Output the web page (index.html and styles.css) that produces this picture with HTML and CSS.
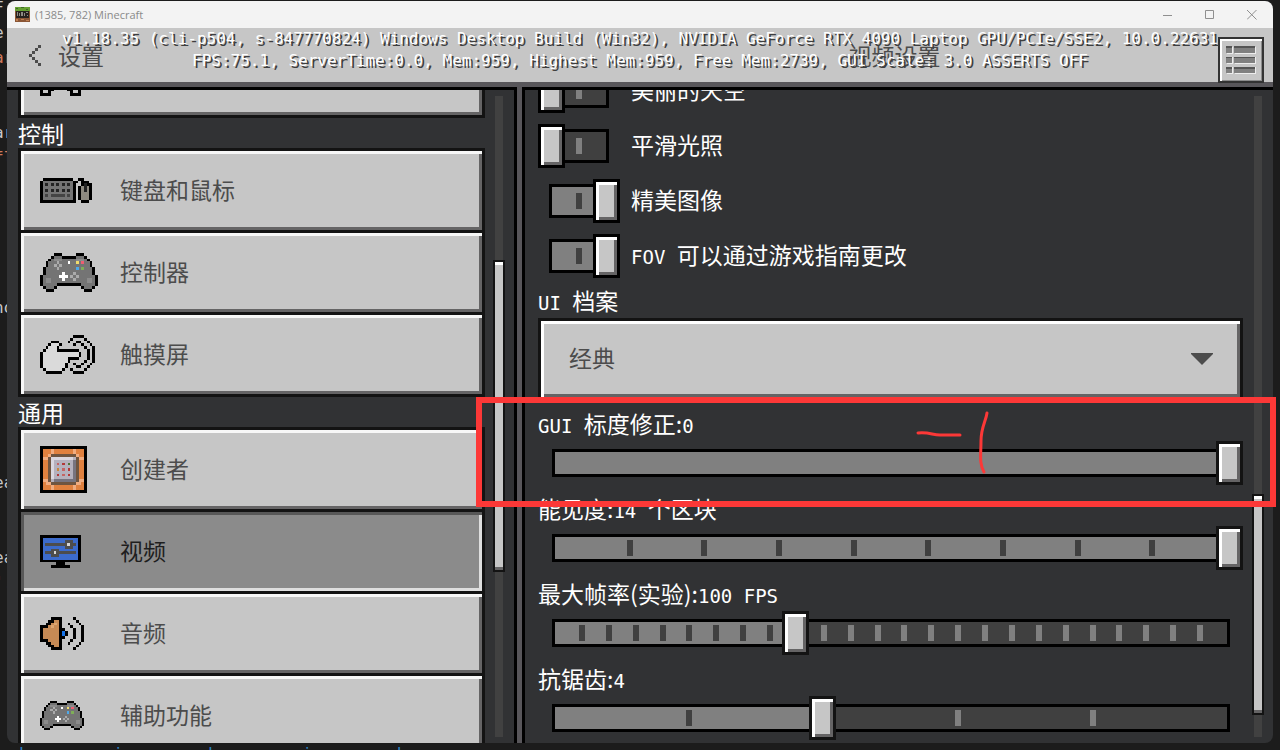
FILE: index.html
```
<!DOCTYPE html>
<html lang="zh-CN">
<head>
    <meta charset="UTF-8">
    <meta name="viewport" content="width=device-width, initial-scale=1.0">
    <title>Minecraft</title>
    <link rel="stylesheet" href="styles.css">
</head>
<body>
    <!-- Editor behind the game window -->
    <div class="editor" aria-hidden="true">
<pre>F
e:
<b>ar</b>


ar
<b>fl</b>





no






ea


ea
<b>'</b>.
</pre>
        <div class="editor-last"><span>do</span><span>i</span><span>do</span><span>i</span><span>do</span></div>
    </div>

    <div class="window">
        <div class="titlebar">
            <svg class="app-icon" viewBox="0 0 14 14" shape-rendering="crispEdges">
                <path fill="#8a5636" d="M0 0h14v14H0z"/>
                <path fill="#65a032" d="M0 0h14v4h-2v1H9V4H6v1H3V4H0z"/>
                <path fill="#3d6a25" d="M1 1h2v1H1zM6 0h2v1H6zM10 2h2v1h-2z"/>
                <path fill="#26221f" d="M1 4h12v6H1z"/>
                <path fill="#8d8a84" d="M2 5h1v3H2zM4 6h1v2H4zM6 5h1v3H6zM8 6h1v2H8zM10 5h2v1h-2zM11 7h1v1h-1z"/>
                <path fill="#c08052" d="M1 11h2v2H1zM6 11h2v1H6zM10 12h3v1h-3z"/>
            </svg>
            <span class="app-title">(1385, 782) Minecraft</span>
            <button class="win-btn" aria-label="最小化"><svg viewBox="0 0 10 10"><path d="M0 5.5h9"/></svg></button>
            <button class="win-btn" aria-label="最大化"><svg viewBox="0 0 10 10"><path d="M.5.5h8v8h-8z"/></svg></button>
            <button class="win-btn" aria-label="关闭"><svg viewBox="0 0 10 10"><path d="M0 0l9.5 9.5M9.5 0L0 9.5"/></svg></button>
        </div>

        <header class="header">
            <div class="header-left">
                <button class="back">
                    <svg viewBox="0 0 4 7" shape-rendering="crispEdges"><path d="M3 0h1v1H3zM2 1h1v1H2zM1 2h1v1H1zM0 3h1v1H0zM1 4h1v1H1zM2 5h1v1H2zM3 6h1v1H3z"/></svg>
                    <span>设置</span>
                </button>
            </div>
            <h1 class="header-title">视频设置</h1>
            <button class="menu-btn" aria-label="菜单">
                <svg viewBox="0 0 31 28" shape-rendering="crispEdges">
                    <path fill="#ededed" d="M1 1h6v7H1zM9 1h22v7H9zM1 11h6v7H1zM9 11h22v7H9zM1 21h6v7H1zM9 21h22v7H9z"/>
                    <path fill="#808080" d="M0 0h6v7H0zM8 0h22v7H8zM0 11h6v6H0zM8 11h22v6H8zM0 21h6v6H0zM8 21h22v6H8z"/>
                    <path fill="#555" d="M0 0h6v2H0zM8 0h22v2H8zM0 11h6v1H0zM8 11h22v1H8zM0 21h6v2H0zM8 21h22v2H8z"/>
                </svg>
            </button>
            <div class="debug">
                <p>v1.18.35 (cli-p504, s-847770824) Windows Desktop Build (Win32), NVIDIA GeForce RTX 4090 Laptop GPU/PCIe/SSE2, 10.0.22631</p>
                <p>FPS:75.1, ServerTime:0.0, Mem:959, Highest Mem:959, Free Mem:2739, GUI Scale: 3.0 ASSERTS OFF</p>
            </div>
        </header>

        <div class="main">
            <nav class="sidebar">
                <div class="menu">
                    <button class="item" aria-label="辅助">
                        <span class="icon"><svg class="w41" viewBox="0 0 15 15" shape-rendering="crispEdges"><path d="M0 12h4v3H0zM11 12h4v3h-4zM3 11h2v2H3zM10 11h2v2h-2z"/><path fill="#c6c6c6" d="M1 12h2v2H1zM12 12h2v2h-2z"/></svg></span>
                    </button>
                    <h2>控制</h2>
                    <button class="item">
                        <span class="icon">
                            <svg class="w52" viewBox="0 0 19 9" shape-rendering="crispEdges">
                                <path d="M1 0h11v1h1v8H0V1h1zM13 1h1v1h-1zM14 0h2v1h-2zM15 1h3v1h1v6h-1v1h-3V8h-1V3h1z"/>
                                <path fill="#747474" d="M1 1h11v7H1z"/>
                                <path fill="#242424" d="M2 2h1v1H2zM4 2h1v1H4zM6 2h1v1H6zM8 2h1v1H8zM10 2h1v1h-1zM2 4h1v1H2zM4 4h1v1H4zM6 4h1v1H6zM8 4h1v1H8zM10 4h1v1h-1z"/>
                                <path fill="#444" d="M2 6h1v1H2zM4 6h5v1H4zM10 6h1v1h-1z"/>
                                <path fill="#8e8a80" d="M15 3h3v5h-3z"/>
                                <path fill="#222" d="M16 2h1v3h-1z"/>
                            </svg>
                        </span>
                        <span class="name">键盘和鼠标</span>
                    </button>
                    <button class="item">
                        <span class="icon">
                            <svg class="w58" viewBox="0 0 21 14" shape-rendering="crispEdges">
                                <g id="pad">
                                    <path d="M5 0h3v1h5V0h3v1h1v1h1v1h1v2h1v3h1v4h-1v1h-1v1h-3v-1h-1v-1H6v1H5v1H2v-1H1v-1H0V8h1V5h1V3h1V2h1V1h1z"/>
                                    <path fill="#747474" d="M5 1h3v1h5V1h3v1h1v1h1v2h1v3h1v4h-1v1h-3v-1h-1v-1H6v1H5v1H2v-1H1V8h1V5h1V3h1V2h1z"/>
                                    <path fill="#8b8b8b" d="M5 2h3v1H5zM13 2h3v1h-3zM2 9h2v2H2zM17 9h2v2h-2z"/>
                                    <path fill="#ababab" d="M6 3h1v1H6zM5 4h1v1H5zM7 4h1v1H7zM6 5h1v1H6zM12 7h1v1h-1zM11 8h1v1h-1zM13 8h1v1h-1zM12 9h1v1h-1z"/>
                                    <path fill="#fff" d="M10 3h1v1h-1zM8 7h1v1h1v1H9v1H8V9H7V8h1z"/>
                                    <path fill="#f0dc6c" d="M13 3h1v1h-1z"/>
                                    <path fill="#ef5d72" d="M15 3h1v1h-1z"/>
                                    <path fill="#4ea9ea" d="M13 5h1v1h-1z"/>
                                    <path fill="#7fae58" d="M15 5h1v1h-1z"/>
                                </g>
                            </svg>
                        </span>
                        <span class="name">控制器</span>
                    </button>
                    <button class="item">
                        <span class="icon">
                            <svg class="w55" viewBox="0 0 20 14" shape-rendering="crispEdges">
                                <path fill="#dadada" d="M4 3h3v1h-1v2h8v2h-4v2H9v2H8v1H2v-1H1V6h1V5h1V4h1z"/>
                                <path d="M4 2h3v1H4zM3 3h1v1H3zM7 3h1v1H7zM2 4h1v1H2zM6 4h1v1h7v1H6zM1 5h1v1H1zM0 6h1v6H0zM1 12h1v1H1zM2 13h6v1H2zM8 12h1v1H8zM9 10h1v2H9zM10 8h4v1h-3v1h-1zM14 6h1v2h-1z"/>
                                <path d="M12 0h4v1h-4zM11 1h1v1h-1zM10 2h1v1h-1zM16 1h1v1h-1zM17 2h1v1h-1zM18 3h1v1h-1zM19 4h1v6h-1zM18 10h1v1h-1zM17 11h1v1h-1zM16 12h1v1h-1zM12 13h4v1h-4zM11 12h1v1h-1z"/>
                                <path d="M13 2h2v1h-2zM12 3h1v1h-1zM15 3h1v1h-1zM16 4h1v1h-1zM17 5h1v4h-1zM16 9h1v1h-1zM15 10h1v1h-1zM13 11h2v1h-2zM12 10h1v1h-1z"/>
                            </svg>
                        </span>
                        <span class="name">触摸屏</span>
                    </button>
                    <h2>通用</h2>
                    <button class="item">
                        <span class="icon">
                            <svg class="w47" viewBox="0 0 17 17" shape-rendering="crispEdges">
                                <path d="M0 0h17v17H0z"/>
                                <path fill="#e0813f" d="M1 1h15v15H1z"/>
                                <path fill="#f0ac80" d="M4 1h1v2H4zM1 4h2v1H1zM3 3h2v1H3zM12 1h1v2h-1zM14 4h2v1h-2zM12 3h2v1h-2zM1 12h2v1H1zM4 14h1v2H4zM2 13h2v1H2zM14 12h2v1h-2zM12 14h1v2h-1zM13 13h2v1h-2z"/>
                                <path fill="#6f5540" d="M4 3h9v1h1v9h-1v1H4v-1H3V4h1z"/>
                                <path fill="#b5b1bd" d="M4 4h9v9H4z"/>
                                <path fill="#dad7df" d="M4 4h8v1H5v7H4z"/>
                                <path fill="#77747f" d="M5 12h7V5h1v8H5z"/>
                                <path fill="#b33838" d="M8 6h1v1H8zM10 8h1v1h-1zM6 10h1v1H6zM10 10h1v1h-1z"/>
                                <path fill="#c46464" d="M6 6h1v1H6zM8 8h1v1H8zM8 10h1v1H8z"/>
                                <path fill="#4d7332" d="M10 6h1v1h-1z"/>
                                <path fill="#c9853a" d="M6 8h1v1H6z"/>
                            </svg>
                        </span>
                        <span class="name">创建者</span>
                    </button>
                    <button class="item selected" aria-current="page">
                        <span class="icon">
                            <svg class="w41" viewBox="0 0 15 12" shape-rendering="crispEdges">
                                <path d="M0 0h15v10H9v1h2v1H4v-1h2v-1H0z"/>
                                <path fill="#3c6bcb" d="M1 1h13v8H1z"/>
                                <path fill="#4d4d4d" d="M2 3h7V2h3v1h1v1h-1v1H9V4H2zM2 6h2V5h3v1h6v1H7v1H4V7H2z"/>
                                <path fill="#d6d6d6" d="M10 3h1v1h-1zM5 6h1v1H5z"/>
                            </svg>
                        </span>
                        <span class="name">视频</span>
                    </button>
                    <button class="item">
                        <span class="icon">
                            <svg class="w44" viewBox="0 0 16 12" shape-rendering="crispEdges">
                                <path d="M4 0h4v4h1v1h1v2H9v1H8v4H4v-1H3v-1H2V9H0V3h2V2h1V1h1z"/>
                                <path fill="#c68a55" d="M5 1h2v10H5v-1H4V9H3V8H1V4h2V3h1V2h1z"/>
                                <path fill="#dba571" d="M5 2h1v1H5zM4 3h1v1H4z"/>
                                <path fill="#1673e8" d="M8 5h1v2H8z"/>
                                <path d="M10 2h1v1h-1zM11 3h1v1h-1zM12 4h1v4h-1zM11 8h1v1h-1zM10 9h1v1h-1zM12 0h1v1h-1zM13 1h1v1h-1zM14 2h1v1h-1zM15 3h1v6h-1zM14 9h1v1h-1zM13 10h1v1h-1zM12 11h1v1h-1z"/>
                            </svg>
                        </span>
                        <span class="name">音频</span>
                    </button>
                    <button class="item">
                        <span class="icon"><svg class="w44" viewBox="0 0 21 14" shape-rendering="crispEdges"><use href="#pad"/></svg></span>
                        <span class="name">辅助功能</span>
                    </button>
                </div>
                <div class="scroll"><div class="thumb" style="top: 25.6%; height: 48.6%"></div></div>
            </nav>

            <div class="divider"></div>

            <main class="content">
                <div class="settings">
                    <label class="toggle"><input type="checkbox"><span class="name">美丽的天空</span></label>
                    <label class="toggle"><input type="checkbox"><span class="name">平滑光照</span></label>
                    <label class="toggle"><input type="checkbox" checked><span class="name">精美图像</span></label>
                    <label class="toggle"><input type="checkbox" checked><span class="name"><span class="latin">FOV </span>可以通过游戏指南更改</span></label>

                    <label class="caption" for="profile"><span class="latin">UI </span>档案</label>
                    <div class="select">
                        <select id="profile">
                            <option>经典</option>
                            <option>Pocket</option>
                        </select>
                        <svg viewBox="0 0 22 12"><path d="M0 0h22v1L11 12 0 1z"/></svg>
                    </div>

                    <label class="caption" for="gui"><span class="latin">GUI </span>标度修正:<span class="latin">0</span></label>
                    <div class="slider" data-steps="1">
                        <input type="range" id="gui" min="-1" max="0" value="0">
                    </div>

                    <label class="caption" for="distance">能见度:<span class="latin">14 </span>个区块</label>
                    <div class="slider" data-steps="9">
                        <input type="range" id="distance" min="5" max="14" value="14">
                    </div>

                    <label class="caption" for="fps">最大帧率(实验):<span class="latin">100 FPS</span></label>
                    <div class="slider" data-steps="25">
                        <input type="range" id="fps" min="10" max="260" step="10" value="100">
                    </div>

                    <label class="caption" for="aa">抗锯齿:<span class="latin">4</span></label>
                    <div class="slider" data-steps="5">
                        <input type="range" id="aa" min="0" max="5" value="2">
                    </div>
                </div>
                <div class="scroll"><div class="thumb" style="top: 62.1%; height: 34.4%"></div></div>
            </main>
        </div>
    </div>

    <!-- Red marker around the GUI scale slider -->
    <div class="marker">
        <svg viewBox="0 0 90 70"><path d="M4 23c12-1 14 2 22 2h20M73 3c-1 8-6 14-6 28 0 14-2 22 3 31"/></svg>
    </div>

    <script>
        // Build the rail and its ticks under every slider
        document.querySelectorAll(".slider").forEach(function (slider) {
            const input = slider.querySelector("input");
            const steps = Number(slider.dataset.steps);
            const rail = document.createElement("div");
            rail.className = "rail";
            slider.prepend(rail);

            function draw() {
                const done = (input.value - input.min) / (input.max - input.min);
                rail.innerHTML = '<div class="fill" style="width: ' + done * 100 + '%"></div>';
                for (let i = 1; i < steps; i++) {
                    const tick = document.createElement("i");
                    if (i / steps <= done) tick.className = "on";
                    rail.appendChild(tick);
                }
            }

            input.addEventListener("input", draw);
            draw();
        });
    </script>
</body>
</html>
```
FILE: styles.css
```
*, *::before {
    margin: 0;
    padding: 0;
    box-sizing: border-box;
}

body {
    display: flex;
    height: 100vh;
    padding: 1px 7px 7px;
    overflow: hidden;
    background: #1c1c1c;
    color: #fff;
    font-family: "Noto Sans CJK SC", sans-serif;
    font-size: 23px;
}

button, select, input {
    font: inherit;
    color: inherit;
    border: none;
    background: none;
}

svg {
    display: block;
}

/* editor */
.editor {
    position: absolute;
    top: -5px;
    left: -6px;
    color: #c8c8c8;
    font: 16px/25px "DejaVu Sans Mono", monospace;
}

.editor pre {
    height: 750px;
    font: inherit;
}

.editor b {
    color: #ce7b5c;
    font-weight: normal;
}

.editor-last {
    display: flex;
    gap: 80px;
    padding-left: 20px;
    line-height: 17px;
    color: #2a86c8;
}

/* window */
.window {
    position: relative;
    display: flex;
    flex-direction: column;
    flex: 1;
    min-width: 0;
    border-radius: 8px;
    overflow: hidden;
    background: #313234;
}

.titlebar {
    display: flex;
    align-items: center;
    flex: none;
    height: 27px;
    padding-left: 8px;
    background: #f3f3f3;
    color: #8a8a8a;
}

.app-icon {
    width: 15px;
    height: 15px;
}

.app-title {
    flex: 1;
    padding-left: 5px;
    font: 11px "Open Sans", sans-serif;
}

.win-btn {
    display: flex;
    align-items: center;
    justify-content: center;
    width: 42px;
    height: 27px;
}

.win-btn svg {
    width: 10px;
    height: 10px;
    fill: none;
    stroke: #8f8f8f;
}

.header {
    position: relative;
    display: flex;
    flex: none;
    height: 62px;
    background: #c6c6c6;
    border-bottom: 3px solid #000;
    box-shadow: inset 0 -5px 0 #58565a;
    color: #4c4c4c;
}

.header-left {
    width: 515px;
}

.back {
    display: flex;
    align-items: center;
    gap: 17px;
    height: 54px;
    padding-left: 22px;
}

.back svg {
    width: 12px;
    height: 21px;
    fill: #4c4c4c;
}

.header-title {
    flex: 1;
    padding-right: 6px;
    font-size: 23px;
    font-weight: 400;
    line-height: 54px;
    text-align: center;
}

.menu-btn {
    position: absolute;
    right: 9px;
    bottom: 4px;
    padding: 7px 6px;
    background: #c6c6c6;
    border: 2px solid #333;
    box-shadow: inset 2px 2px 0 #fff, inset -1px -1px 0 #8b8b8b;
}

.menu-btn svg {
    width: 30px;
    height: 28px;
}

/* debug text over the header */
.debug {
    position: absolute;
    top: 0;
    left: 0;
    right: 0;
    color: #fff;
    font: 16px/22px "DejaVu Sans Mono", monospace;
    text-align: center;
    text-shadow: 2px 2px 0 #3e3e3e;
    white-space: nowrap;
    pointer-events: none;
}

/* panels */
.main {
    display: flex;
    flex: 1;
    min-height: 0;
}

.sidebar {
    display: flex;
    gap: 10px;
    width: 507px;
    padding: 0 11px;
    overflow: hidden;
}

.menu {
    flex: 1;
    margin-top: -57px;
}

.menu h2 {
    font-size: 23px;
    font-weight: 400;
    line-height: 30px;
}

.item {
    display: flex;
    align-items: center;
    width: 100%;
    height: 85px;
    padding-left: 19px;
    background: #c6c6c6;
    border: 3px solid #131313;
    box-shadow: inset 3px 3px 0 #f7f7f7, inset -3px -3px 0 #656465;
    color: #4c4c4c;
}

.item + .item {
    margin-top: -3px;
}

.item.selected {
    background: #8b8b8b;
    box-shadow: inset 3px 3px 0 #585858, inset -3px -3px 0 #dedede;
    color: #1e1e1e;
}

.icon {
    width: 80px;
}

.name {
    padding-bottom: 4px;
}

.w41 { width: 41px; }
.w44 { width: 44px; }
.w47 { width: 47px; }
.w52 { width: 52px; }
.w55 { width: 55px; }
.w58 { width: 58px; }

.scroll {
    position: relative;
    flex: none;
    width: 8px;
    margin: 6px 0;
    background: #414141;
}

.thumb {
    position: absolute;
    left: -2px;
    right: -2px;
    background: #c6c6c6;
    border: 2px solid #131313;
    box-shadow: inset 0 3px 0 #fff, inset 0 -3px 0 #656465;
}

.divider {
    flex: none;
    width: 11px;
    margin-top: -3px;
    background: #58565a;
    border: solid #000;
    border-width: 0 3px;
    z-index: 1;
}

.content {
    display: flex;
    flex: 1;
    gap: 11px;
    min-width: 0;
    padding: 0 11px 0 13px;
    overflow: hidden;
}

.settings {
    flex: 1;
    min-width: 0;
    margin-top: -27px;
}

.latin {
    font-family: "DejaVu Sans Mono", monospace;
    font-size: 19px;
    line-height: 1;
    white-space: pre;
}

/* toggles */
.toggle {
    display: flex;
    align-items: center;
    gap: 11px;
    height: 55px;
    padding-left: 11px;
}

.toggle input {
    appearance: none;
    position: relative;
    width: 60px;
    height: 34px;
    margin-right: 11px;
    background: linear-gradient(#808080, #808080) center / 6px 16px no-repeat #404040;
    border: 3px solid #000;
}

.toggle input:checked {
    background: linear-gradient(#404040, #404040) center / 6px 16px no-repeat #808080;
}

.toggle input::before {
    content: "";
    position: absolute;
    top: -8px;
    left: -14px;
    width: 27px;
    height: 44px;
    background: #c6c6c6;
    border: 3px solid #000;
    box-shadow: inset 3px 3px 0 #fff, inset -3px -3px 0 #656465;
}

.toggle input:checked::before {
    left: auto;
    right: -14px;
}

/* captions and drop-down */
.caption {
    display: block;
    height: 41px;
    padding-top: 8px;
    line-height: 30px;
    white-space: nowrap;
}

.toggle + .caption {
    height: 35px;
    padding-top: 2px;
}

.select {
    display: grid;
    align-items: center;
}

.select select {
    grid-area: 1 / 1;
    appearance: none;
    width: 100%;
    height: 82px;
    padding: 0 0 4px 28px;
    background: #c6c6c6;
    border: 3px solid #131313;
    box-shadow: inset 3px 3px 0 #fff, inset -3px -3px 0 #656465;
    color: #4c4c4c;
}

.select svg {
    grid-area: 1 / 1;
    justify-self: end;
    width: 22px;
    height: 12px;
    margin-right: 30px;
    fill: #4c4c4c;
    pointer-events: none;
}

/* sliders */
.slider {
    display: grid;
    align-items: center;
}

.slider input {
    grid-area: 1 / 1;
    appearance: none;
    width: 100%;
    height: 44px;
    z-index: 1;
}

.slider input::-webkit-slider-thumb {
    appearance: none;
    width: 27px;
    height: 44px;
    background: #c6c6c6;
    border: 3px solid #131313;
    box-shadow: inset 3px 3px 0 #fff, inset -3px -3px 0 #656465;
}

.rail {
    grid-area: 1 / 1;
    display: flex;
    position: relative;
    align-items: center;
    justify-content: space-evenly;
    height: 28px;
    margin: 0 13px 0 14px;
    background: #404040;
    border: 3px solid #000;
}

.fill {
    position: absolute;
    left: 0;
    height: 100%;
    background: #808080;
}

.rail i {
    position: relative;
    width: 6px;
    height: 16px;
    margin: 0 -3px;
    background: #808080;
}

.rail i.on {
    background: #404040;
}

/* marker */
.marker {
    position: absolute;
    top: 397px;
    left: 476px;
    right: 4px;
    height: 110px;
    border: 6px solid #fc3837;
    pointer-events: none;
    z-index: 2;
}

.marker svg {
    width: 90px;
    margin: 7px 0 0 432px;
    fill: none;
    stroke: #fc3837;
    stroke-width: 3;
    stroke-linecap: round;
}
```
